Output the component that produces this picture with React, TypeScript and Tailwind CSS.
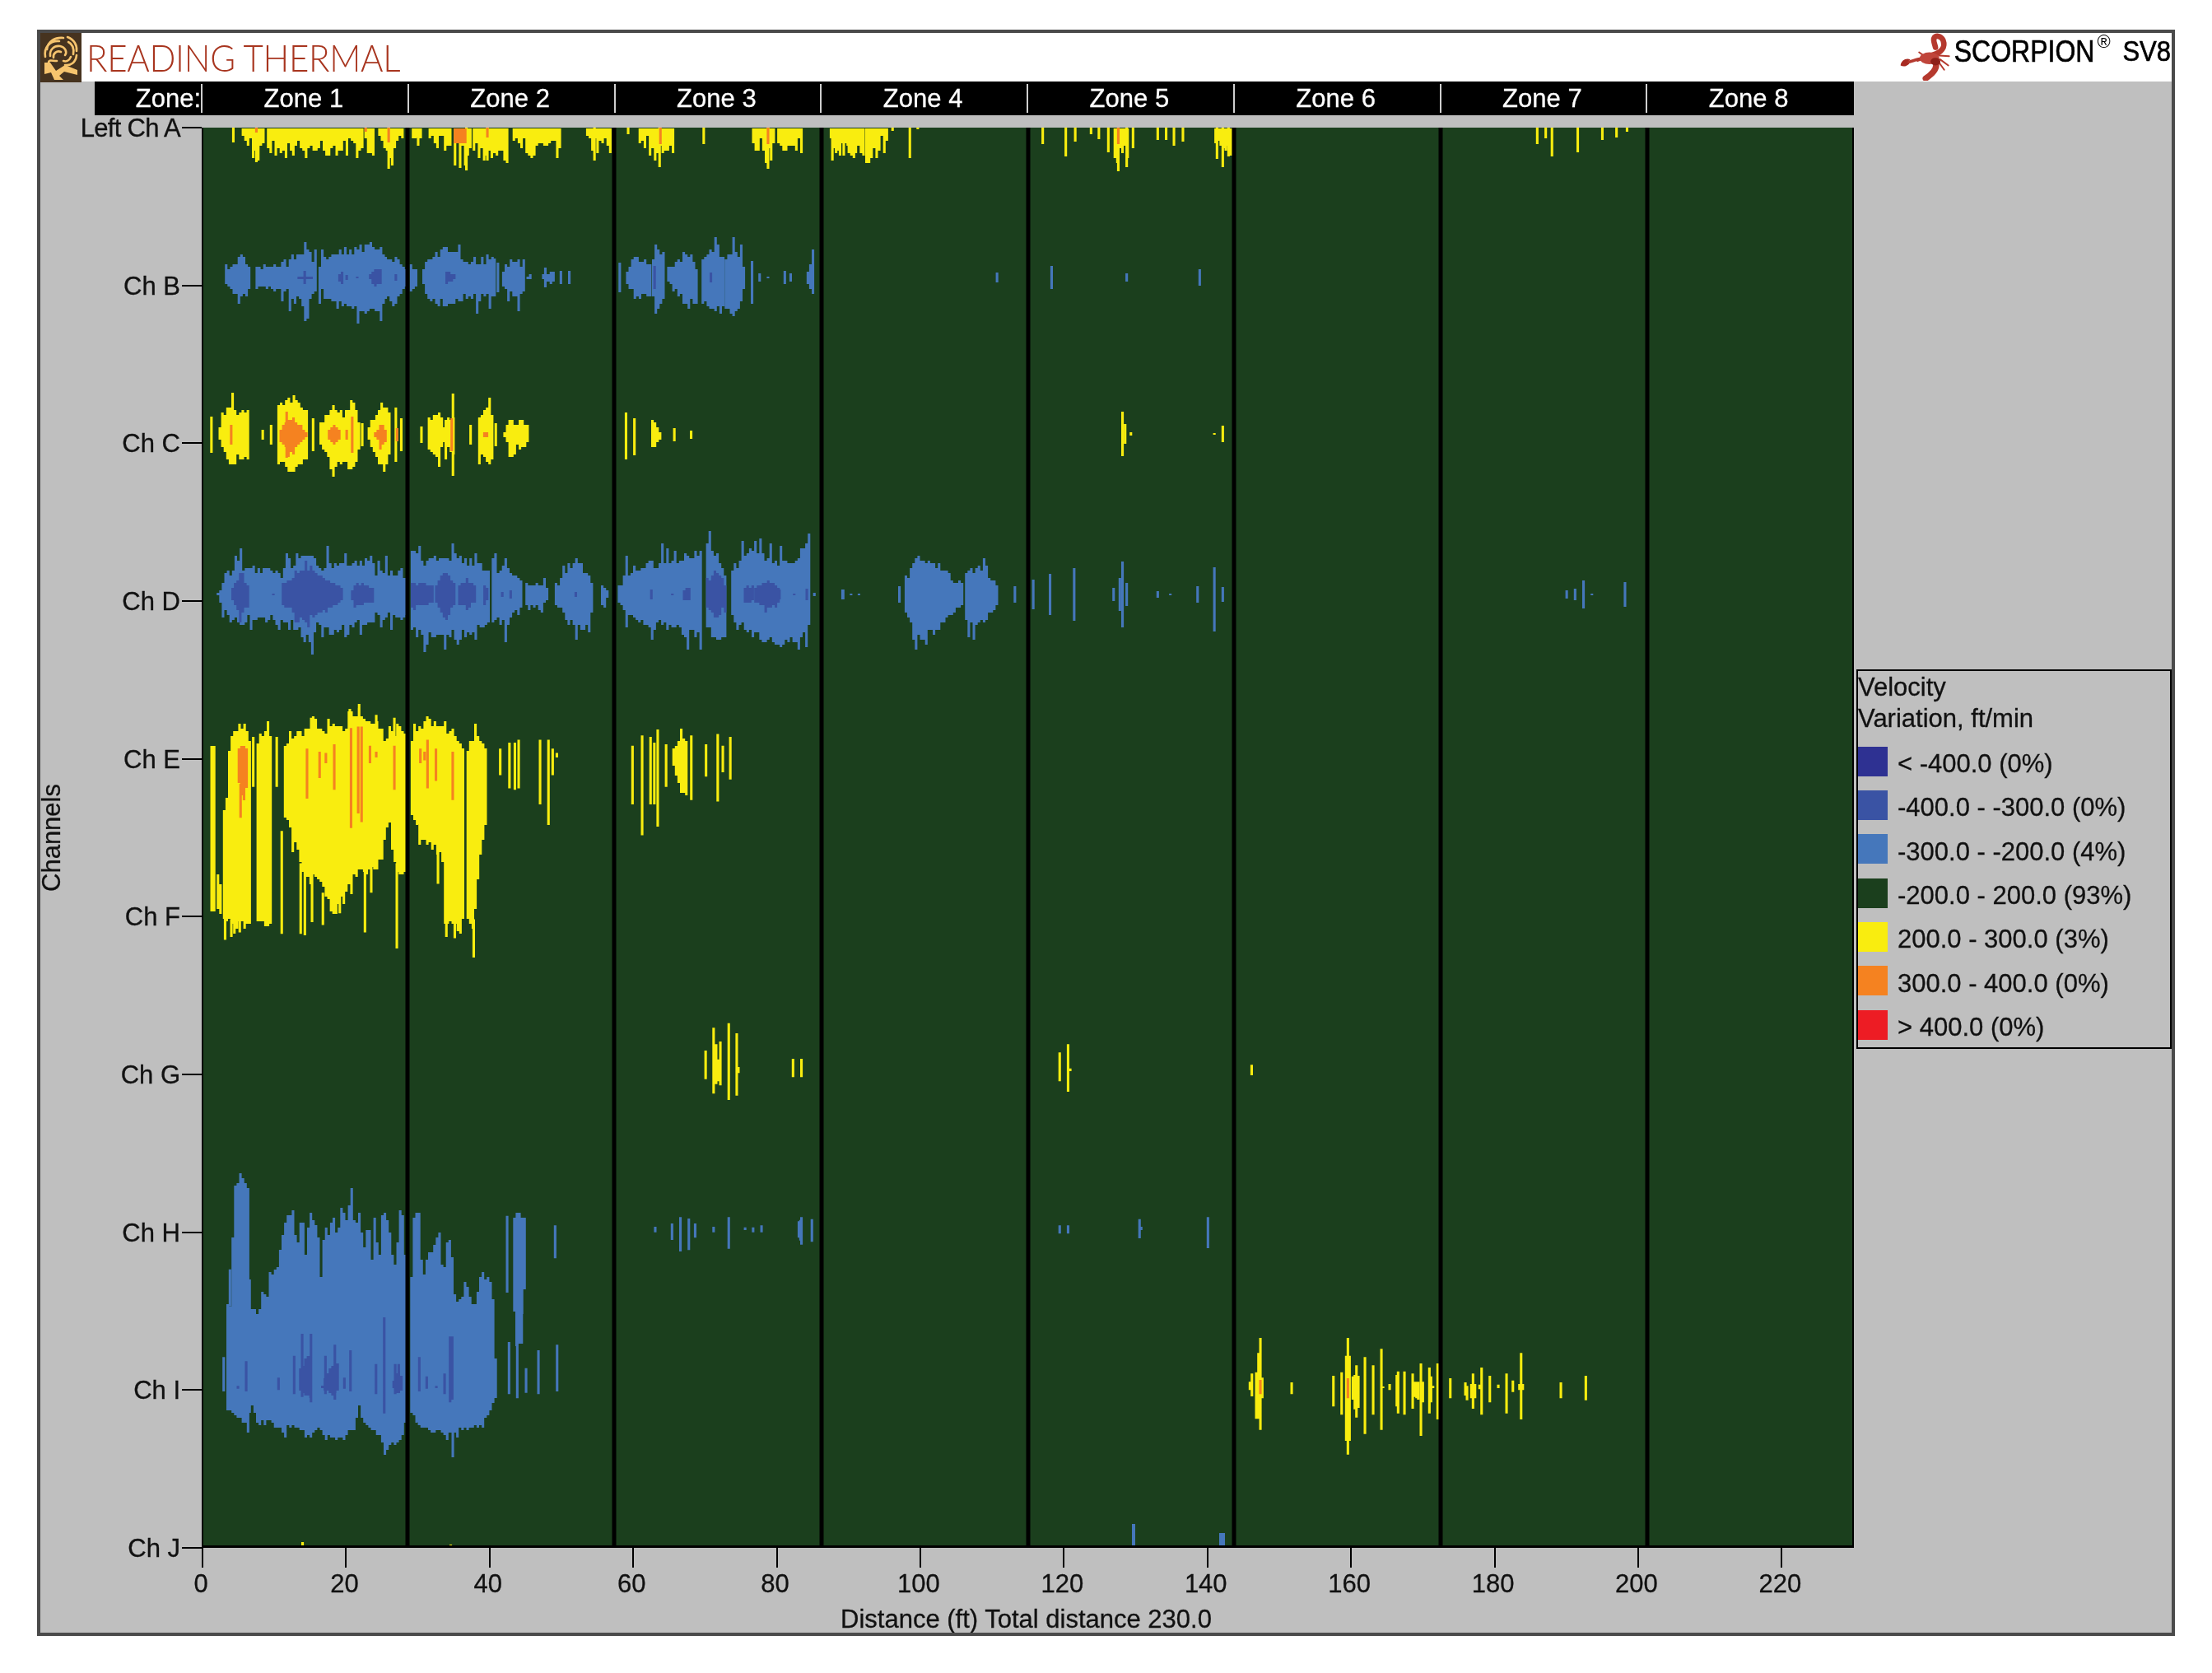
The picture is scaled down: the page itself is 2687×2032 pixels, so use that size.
import { type ReactNode } from "react"

// Velocity variation heat map (Reading Thermal Scorpion SV8).
// The heat map marks are built from column envelopes, in page pixels, and
// drawn as one svg path per colour band.

const ZONES = ["Zone 1", "Zone 2", "Zone 3", "Zone 4", "Zone 5", "Zone 6", "Zone 7", "Zone 8"]
const CHANNELS = ["Left Ch A", "Ch B", "Ch C", "Ch D", "Ch E", "Ch F", "Ch G", "Ch H", "Ch I", "Ch J"]
const TICKS = [0, 20, 40, 60, 80, 100, 120, 140, 160, 180, 200, 220]
const DIVIDERS = [495, 746, 998, 1249, 1499, 1750, 2001]

const LEGEND = [
  { color: "bg-[#2e3192]", label: "< -400.0 (0%)" },
  { color: "bg-[#3a53a4]", label: "-400.0 - -300.0 (0%)" },
  { color: "bg-[#4577bb]", label: "-300.0 - -200.0 (4%)" },
  { color: "bg-[#1b3f1d]", label: "-200.0 - 200.0 (93%)" },
  { color: "bg-[#f9ed0f]", label: "200.0 - 300.0 (3%)" },
  { color: "bg-[#f58220]", label: "300.0 - 400.0 (0%)" },
  { color: "bg-[#ed1c24]", label: "> 400.0 (0%)" },
]

type View = { x0: number; sx: number; y0: number; sy: number }
type Pt = [number, number, number]
type Lc = [number, number, number?]

const Z5: View = { x0: 230, sx: 1.96, y0: 620, sy: 2.8 }
const Z6: View = { x0: 230, sx: 3, y0: 1400, sy: 3 }
const Z7: View = { x0: 240, sx: 1.96, y0: 150, sy: 3 }
const Z8: View = { x0: 1000, sx: 1.568, y0: 150, sy: 2.41 }
const Z9: View = { x0: 1480, sx: 3, y0: 1600, sy: 3 }
const Z12: View = { x0: 750, sx: 1.96, y0: 1220, sy: 3 }

const GRAIN = 3.1

class Band {
  d = ""
  seed = 7
  rnd() {
    this.seed = (this.seed * 16807) % 2147483647
    return this.seed / 2147483647
  }
  rect(x: number, top: number, bot: number, w = GRAIN) {
    this.d += `M${x.toFixed(1)} ${top.toFixed(1)}h${w}V${bot.toFixed(1)}h-${w}Z`
  }
  fill(pts: Pt[], j: number, comb = false) {
    const x1 = pts[pts.length - 1][0]
    let i = 0
    for (let x = pts[0][0]; x <= x1; x += GRAIN) {
      while (i < pts.length - 2 && x > pts[i + 1][0]) i++
      const [xa, ta, ba] = pts[i]
      const [xb, tb, bb] = pts[i + 1]
      const f = xb === xa ? 0 : (x - xa) / (xb - xa)
      let top = ta + (tb - ta) * f
      let bot = ba + (bb - ba) * f
      const amp = j * Math.min(1, (bot - top) / 40)
      if (comb) {
        // teeth hanging from the top edge: most are short, a few reach the full length
        const r = this.rnd()
        bot -= (bot - top) * (r < 0.35 ? 0.45 + 0.25 * this.rnd() : r < 0.75 ? 0.2 + 0.25 * this.rnd() : 0.15 * this.rnd())
      } else {
        top -= this.rnd() < 0.18 ? amp * 2.2 * this.rnd() : amp * (this.rnd() - 0.55)
        bot += this.rnd() < 0.18 ? amp * 2.2 * this.rnd() : amp * (this.rnd() - 0.55)
      }
      this.rect(x, Math.round(top / 3) * 3, Math.round(bot / 3) * 3)
    }
  }
  // envelope given as up / down around a centre line
  blob(v: View, cy: number, pts: Pt[], j = 6, comb = false) {
    this.fill(pts.map(([d, u, b]) => [v.x0 + d / v.sx, cy - u, cy + b] as Pt), j, comb)
  }
  // envelope given as top / bottom in zoom coordinates
  area(v: View, pts: Pt[], j = 6) {
    this.fill(pts.map(([d, t, b]) => [v.x0 + d / v.sx, v.y0 + t / v.sy, v.y0 + b / v.sy] as Pt), j)
  }
  lines(v: View, rows: Pt[]) {
    for (const [d, t, b] of rows) this.rect(v.x0 + d / v.sx - 1.5, v.y0 + t / v.sy, v.y0 + b / v.sy)
  }
  ticks(v: View, cy: number, rows: Lc[]) {
    for (const [d, u, b] of rows) this.rect(v.x0 + d / v.sx - 1.5, cy - u, cy + (b ?? u))
  }
}

function buildBands() {
  const blue = new Band()
  const dark = new Band()
  const yellow = new Band()
  const orange = new Band()

  // Ch A hangs from the top edge
  const a = 155
  for (const p of [
    [[105, 0, 30], [140, 0, 44], [155, 0, 24]],
    [[165, 0, 36], [220, 0, 38]],
    [[225, 0, 36], [390, 0, 38]],
    [[397, 0, 38], [420, 0, 36]],
    [[430, 0, 20], [455, 0, 52], [490, 0, 20]],
    [[510, 0, 42], [530, 0, 28]],
    [[550, 0, 32], [600, 0, 26]],
    [[610, 0, 50], [640, 0, 52], [650, 0, 28]],
    [[655, 0, 42], [740, 0, 44]],
    [[750, 0, 36], [860, 0, 40]],
    [[925, 0, 16], [945, 0, 42], [985, 0, 28]],
    [[1050, 0, 28], [1100, 0, 50], [1130, 0, 36]],
    [[1320, 0, 28], [1345, 0, 46], [1360, 0, 50], [1370, 0, 18]],
    [[1380, 0, 30], [1435, 0, 32]],
    [[1505, 0, 42], [1568, 0, 36]],
  ] as Pt[][]) yellow.blob(Z7, a, p, 0, true)
  yellow.ticks(Z7, a, [[85, 0, 18], [1025, 0, 8], [1205, 0, 20], [945, 0, 40], [455, 0, 50], [640, 0, 52], [1358, 0, 50], [140, 0, 42], [690, 0, 40], [1100, 0, 48]])
  for (const p of [
    [[15, 0, 44], [45, 0, 42]],
    [[50, 0, 28], [75, 0, 36]],
    [[80, 0, 48], [120, 0, 30]],
    [[553, 0, 44], [580, 0, 52]],
    [[745, 0, 38], [775, 0, 38]],
  ] as Pt[][]) yellow.blob(Z8, a, p, 0, true)
  yellow.ticks(Z8, a, [
    [132, 0, 4], [165, 0, 37], [180, 0, 2], [418, 0, 20], [462, 0, 35], [480, 0, 17], [510, 0, 8], [525, 0, 14], [543, 0, 30],
    [562, 0, 53], [578, 0, 48], [590, 0, 25], [637, 0, 15], [653, 0, 15], [668, 0, 22], [685, 0, 17], [750, 0, 38], [761, 0, 48], [772, 0, 35],
    [1360, 0, 20], [1376, 0, 13], [1388, 0, 35], [1437, 0, 30], [1484, 0, 15], [1511, 0, 12], [1531, 0, 5],
  ])
  orange.ticks(Z7, a, [[140, 0, 6], [400, 0, 5], [455, 0, 18], [690, 0, 12], [1102, 0, 20], [1358, 0, 20]])
  orange.blob(Z7, a, [[610, 0, 19], [640, 0, 19]], 0)
  orange.ticks(Z8, a, [[562, 0, 20]])

  // Ch B
  const b = 337
  for (const p of [
    [[65, 8, 8], [80, 16, 16], [100, 26, 24], [125, 13, 13]],
    [[138, 11, 11], [160, 14, 14], [212, 16, 16], [218, 22, 22], [255, 34, 34], [282, 16, 13]],
    [[288, 16, 16], [320, 30, 30], [340, 32, 34], [410, 38, 42], [440, 32, 30]],
    [[445, 22, 25], [465, 25, 32], [495, 9, 9]],
    [[505, 15, 15], [523, 8, 8]],
    [[535, 11, 11], [550, 25, 30], [595, 36, 32], [640, 21, 25], [700, 21, 23]],
    [[725, 9, 9], [745, 23, 21], [775, 17, 23]],
    [[783, 2, 2], [795, 4, 4]],
    [[820, 3, 3], [850, 8, 8]],
    [[1020, 9, 9], [1040, 23, 23], [1075, 16, 23]],
    [[1082, 26, 26], [1090, 44, 48], [1110, 12, 22]],
    [[1118, 7, 7], [1165, 30, 36], [1188, 14, 25]],
    [[1200, 22, 34], [1230, 36, 39], [1250, 23, 34]],
    [[1255, 22, 34], [1280, 34, 44], [1300, 14, 16]],
    [[1450, 8, 8], [1465, 22, 30]],
  ] as Pt[][]) blue.blob(Z7, b, p, 10)
  blue.ticks(Z7, b, [[707, 23], [715, 18], [828, 12], [865, 8], [885, 8], [1005, 18], [1320, 20, 32], [1338, 5], [1358, 1], [1398, 8], [1412, 5]])
  dark.blob(Z7, b, [[238, 2, 2], [272, 2, 2]], 0)
  dark.ticks(Z7, b, [[255, 8], [355, 3], [380, 1], [472, 4], [1088, 14], [1222, 6]])
  dark.blob(Z7, b, [[335, 5, 5], [345, 8, 8]], 0)
  dark.blob(Z7, b, [[408, 3, 3], [420, 10, 10], [435, 9, 9]], 2)
  dark.blob(Z7, b, [[590, 8, 8], [612, 2, 2]], 0)
  blue.ticks(Z8, b, [[331, 6], [435, 14], [578, 5], [717, 10]])

  // Ch C
  const c = 528
  for (const p of [
    [[50, 8, 8], [65, 30, 28], [80, 36, 40], [90, 28, 28], [120, 28, 28]],
    [[190, 33, 33], [225, 46, 44], [262, 26, 26]],
    [[290, 14, 14], [320, 36, 36], [345, 25, 31], [368, 42, 44], [382, 16, 16]],
    [[405, 8, 8], [435, 39, 39], [458, 24, 24]],
    [[548, 16, 16], [570, 25, 27], [585, 11, 11]],
    [[588, 18, 18], [612, 24, 24]],
    [[668, 24, 24], [690, 32, 33], [700, 25, 24]],
    [[728, 3, 3], [745, 24, 26], [755, 12, 12], [765, 16, 16], [778, 14, 14], [788, 2, 2]],
    [[1080, 18, 16], [1100, 3, 3]],
  ] as Pt[][]) yellow.blob(Z7, c, p, 8)
  yellow.ticks(Z7, c, [[33, 22], [155, 6], [175, 12], [275, 20], [392, 14], [472, 33], [485, 20], [533, 10], [608, 50], [650, 12], [710, 14], [1020, 27, 30], [1040, 20, 25], [1135, 8], [1175, 5]])
  orange.blob(Z7, c, [[195, 6, 6], [212, 18, 22], [225, 20, 20], [258, 3, 3]], 6)
  orange.blob(Z7, c, [[310, 5, 5], [322, 13, 13], [337, 3, 3]], 5)
  orange.blob(Z7, c, [[420, 2, 2], [435, 14, 14], [450, 3, 3]], 5)
  orange.blob(Z7, c, [[65, 1, 1], [118, 1, 1]], 0)
  orange.blob(Z7, c, [[680, 3, 3], [695, 1, 1]], 0)
  orange.ticks(Z7, c, [[80, 12], [212, 28], [355, 6], [368, 22], [475, 8], [605, 20]])
  yellow.ticks(Z8, 527, [[570, 27], [575, 12], [586, 2], [745, 1], [761, 10]])

  // Ch D
  const d = 722
  for (const p of [
    [[65, 2, 2], [92, 27, 27], [120, 42, 42], [130, 30, 30], [220, 27, 29], [285, 52, 54], [300, 36, 40], [380, 36, 38], [385, 38, 36], [435, 38, 34], [440, 24, 29], [490, 28, 28], [515, 24, 27]],
    [[527, 52, 46], [560, 40, 50], [600, 47, 46], [640, 42, 50], [680, 38, 44], [710, 25, 31]],
    [[720, 30, 30], [750, 35, 35], [790, 16, 16]],
    [[800, 12, 12], [820, 14, 14], [850, 8, 8]],
    [[870, 12, 12], [900, 33, 32], [920, 39, 36], [940, 27, 46], [960, 9, 9]],
    [[980, 11, 11], [995, 5, 5]],
    [[1020, 11, 11], [1050, 31, 27], [1080, 35, 32], [1130, 39, 36], [1170, 39, 46], [1220, 55, 46]],
    [[1230, 66, 36], [1250, 41, 56], [1275, 27, 46]],
    [[1290, 32, 27], [1330, 55, 46], [1400, 38, 60], [1450, 46, 54], [1465, 64, 44], [1478, 56, 44]],
  ] as Pt[][]) blue.blob(Z5, d, p, 11)
  blue.ticks(Z5, d, [[1488, 2], [1555, 6]])
  for (const p of [
    [[100, 8, 8], [120, 25, 25], [140, 8, 8]],
    [[220, 12, 12], [275, 32, 32], [340, 14, 14], [360, 8, 8]],
    [[385, 6, 6], [395, 14, 14], [435, 8, 8]],
    [[527, 13, 13], [555, 14, 14], [580, 8, 8]],
    [[585, 10, 10], [607, 30, 30], [630, 12, 12]],
    [[640, 12, 12], [660, 18, 18], [680, 8, 8]],
    [[700, 12, 12], [710, 6, 6]],
    [[1175, 7, 7], [1190, 7, 7]],
    [[1230, 15, 15], [1250, 30, 30], [1275, 12, 12]],
    [[1320, 10, 10], [1340, 8, 8]],
    [[1345, 8, 8], [1375, 17, 17], [1400, 10, 10]],
  ] as Pt[][]) dark.blob(Z5, d, p, 5)
  dark.ticks(Z5, d, [[200, 1], [745, 3], [765, 5], [920, 3], [1100, 6], [1150, 1], [1405, 6], [1440, 1], [1470, 7]])
  blue.blob(Z8, d, [[155, 20, 20], [178, 44, 52], [215, 34, 46], [250, 16, 16], [265, 11, 11]], 10)
  blue.blob(Z8, d, [[270, 27, 36], [295, 30, 38], [330, 10, 10]], 10)
  blue.ticks(Z8, d, [
    [38, 6], [53, 1], [68, 1], [145, 10], [365, 10], [400, 18], [432, 25], [478, 32], [553, 8], [565, 20], [570, 40], [578, 14],
    [637, 4], [661, 1], [713, 10], [745, 33, 45], [761, 9], [1416, 5], [1432, 7], [1448, 17], [1464, 1], [1527, 15],
  ])

  // Ch E / F
  for (const p of [
    [[50, 800, 1350], [62, 815, 1350]],
    [[65, 1240, 1350], [75, 1280, 1390]],
    [[80, 1020, 1390], [85, 1020, 1400], [95, 780, 1400], [125, 725, 1400], [145, 780, 1400]],
    [[160, 800, 1400], [175, 755, 1410], [195, 780, 1400]],
    [[225, 790, 1050], [250, 775, 1130], [270, 770, 1240], [290, 730, 1240], [310, 750, 1260], [340, 730, 1370], [370, 740, 1290], [380, 695, 1260], [405, 690, 1230], [425, 730, 1230], [445, 715, 1210], [465, 780, 1110], [475, 780, 1050], [480, 780, 1150], [495, 730, 1240], [512, 770, 1240]],
    [[527, 790, 1040], [545, 740, 1100], [570, 720, 1140], [600, 740, 1170]],
    [[606, 740, 1400], [625, 750, 1400], [640, 805, 1400], [650, 805, 1400]],
    [[660, 805, 1400], [675, 770, 1400], [690, 780, 1180], [705, 795, 1050]],
    [[1150, 810, 870], [1170, 770, 975], [1185, 800, 970]],
  ] as Pt[][]) yellow.area(Z5, p, 9)
  yellow.lines(Z5, [
    [85, 1300, 1460], [100, 1390, 1450], [120, 1390, 1435], [152, 770, 940], [208, 770, 940], [220, 1090, 1440],
    [265, 1200, 1440], [275, 1200, 1445], [292, 1200, 1400], [318, 1300, 1410], [358, 1300, 1370], [418, 1200, 1435], [433, 1200, 1300], [494, 1200, 1490],
    [382, 675, 760], [404, 672, 760], [445, 695, 760], [290, 705, 760], [488, 705, 780],
    [592, 1150, 1270], [612, 1390, 1450], [632, 1390, 1455], [677, 1390, 1520],
    [740, 810, 900], [762, 790, 945], [775, 790, 950], [784, 780, 945], [835, 780, 1000], [855, 780, 1070], [865, 810, 900], [875, 825, 840],
    [1055, 800, 1000], [1078, 765, 1105], [1098, 770, 1000], [1107, 790, 1000], [1115, 745, 1075], [1135, 795, 940], [1195, 765, 985], [1230, 795, 905], [1258, 760, 990], [1270, 800, 890], [1288, 770, 915],
  ])
  orange.area(Z5, [[115, 810, 930], [125, 795, 1000], [135, 810, 930]], 2)
  orange.lines(Z5, [
    [122, 930, 1045], [280, 810, 980], [310, 820, 910], [325, 825, 860], [345, 795, 950], [385, 740, 1080], [402, 735, 1030], [410, 735, 1060], [430, 800, 860], [445, 820, 840], [488, 800, 950],
    [550, 810, 860], [560, 820, 850], [567, 780, 945], [587, 810, 920], [627, 820, 985],
  ])

  // Ch G
  yellow.lines(Z12, [
    [210, 168, 272], [229, 85, 325], [235, 145, 290], [240, 200, 280], [245, 135, 295], [265, 68, 348], [284, 105, 332], [288, 228, 250],
    [418, 198, 265], [438, 198, 265], [1053, 175, 280], [1073, 145, 318], [1078, 233, 243], [1510, 220, 258],
  ])

  // Ch H / I
  for (const p of [
    [[135, 555, 930], [145, 555, 940], [160, 120, 950], [190, 85, 980], [210, 130, 1000]],
    [[215, 455, 950], [225, 570, 915], [240, 570, 960], [245, 610, 960], [260, 520, 965], [280, 520, 970], [290, 460, 975], [320, 410, 1000], [340, 270, 1030], [350, 235, 1000], [375, 215, 990], [390, 380, 1000], [405, 215, 1020], [420, 370, 1020], [435, 215, 1030], [450, 240, 1020], [465, 300, 985], [475, 460, 1010], [490, 240, 1045], [500, 320, 1040], [520, 225, 1040], [535, 310, 1045], [550, 195, 1030], [570, 250, 1020], [587, 130, 1020], [600, 290, 1000], [615, 215, 920], [630, 350, 980], [650, 260, 990], [665, 430, 1010], [670, 260, 1020], [690, 390, 1040], [700, 205, 1050], [715, 230, 1085], [730, 320, 1060], [745, 440, 1060], [765, 190, 1040], [780, 260, 1020], [790, 730, 880]],
    [[805, 460, 940], [815, 230, 970], [835, 205, 990], [845, 465, 1005], [860, 390, 1005], [890, 335, 1015], [907, 275, 1020], [920, 480, 1025], [935, 320, 1040], [950, 330, 1020], [965, 540, 1015], [985, 535, 1010], [1005, 470, 1010], [1025, 560, 1010], [1040, 540, 1000], [1065, 425, 985], [1080, 480, 960], [1100, 480, 930], [1105, 585, 900], [1114, 810, 880]],
    [[1180, 230, 570], [1200, 215, 690], [1220, 260, 440]],
    [[1188, 570, 700], [1212, 570, 690]],
  ] as Pt[][]) blue.area(Z6, p, 5)
  blue.lines(Z6, [
    [125, 745, 870], [148, 425, 560], [960, 1000, 1110], [1158, 230, 510], [1165, 690, 880], [1195, 695, 895], [1227, 785, 875], [1272, 720, 880], [1333, 265, 385], [1340, 700, 870],
  ])
  for (const p of [
    [[400, 790, 870], [425, 740, 890], [440, 740, 890]],
    [[480, 845, 855], [510, 780, 880], [530, 770, 880], [545, 770, 850]],
    [[740, 830, 860], [755, 790, 885], [775, 830, 860]],
  ] as Pt[][]) dark.area(Z6, p, 2)
  dark.lines(Z6, [
    [177, 850, 860], [207, 760, 870], [325, 820, 865], [382, 740, 880], [411, 660, 890], [443, 660, 910], [496, 740, 880], [530, 700, 900], [565, 820, 860], [587, 720, 870],
    [680, 770, 880], [710, 600, 950], [750, 770, 880], [763, 770, 870], [838, 745, 870], [865, 815, 860], [900, 850, 858], [930, 805, 880], [950, 670, 910], [958, 670, 900],
  ])
  blue.lines(Z12, [
    [90, 810, 830], [130, 798, 858], [150, 775, 900], [170, 780, 895], [185, 798, 850], [229, 810, 830], [265, 775, 890], [304, 812, 822], [323, 812, 830], [343, 805, 830],
    [432, 790, 850], [436, 785, 860], [438, 775, 875], [463, 782, 865], [1053, 805, 835], [1073, 805, 835], [1243, 782, 852], [1247, 810, 822], [1406, 775, 888],
  ])

  // Ch I, right hand yellow run
  yellow.lines(Z9, [
    [115, 235, 265], [122, 205, 288], [138, 200, 370], [146, 130, 370], [153, 75, 410], [160, 220, 295], [267, 237, 280], [419, 213, 325], [449, 200, 355],
    [466, 140, 450], [472, 75, 500], [478, 140, 450], [490, 215, 300], [497, 210, 335], [503, 175, 365], [510, 213, 330], [534, 145, 425], [564, 175, 355], [594, 115, 410], [600, 252, 258], [624, 243, 265],
    [650, 210, 325], [655, 197, 350], [678, 197, 355], [708, 205, 333], [716, 235, 290], [722, 235, 295], [728, 235, 300], [738, 168, 432], [745, 235, 310], [769, 183, 350], [775, 215, 310], [782, 250, 258], [799, 168, 372],
    [845, 222, 295], [900, 237, 285], [906, 250, 302], [922, 243, 295], [928, 205, 333], [935, 243, 295], [952, 245, 262], [959, 183, 355], [989, 213, 310], [1020, 245, 258], [1050, 205, 350], [1073, 230, 272],
    [1097, 243, 265], [1103, 130, 372], [1109, 243, 265], [1248, 237, 295], [1339, 213, 302],
  ])
  orange.lines(Z9, [[153, 228, 280], [472, 222, 295]])

  // Ch J, barely there
  yellow.rect(366, 1873, 1879)
  yellow.rect(546, 1876, 1879)
  blue.rect(1375, 1851, 1880, 4)
  blue.rect(1481, 1862, 1880, 7)

  return { blue: blue.d, dark: dark.d, yellow: yellow.d, orange: orange.d }
}

const BANDS = buildBands()

function HeatMap() {
  return (
    <svg viewBox="245 155 2007 1725" className="block h-[1725px] w-[2007px]">
      <rect x="245" y="155" width="2007" height="1725" fill="#1b3f1d" />
      <path d={BANDS.blue} fill="#4577bb" />
      <path d={BANDS.dark} fill="#3a53a4" />
      <path d={BANDS.yellow} fill="#f9ed0f" />
      <path d={BANDS.orange} fill="#f58220" />
      {DIVIDERS.map((x) => (
        <rect key={x} x={x - 2.5} y="155" width="5" height="1725" fill="#000" />
      ))}
      <rect x="245" y="155" width="2" height="1725" fill="#000" />
      <rect x="2250" y="155" width="2" height="1725" fill="#000" />
      <rect x="245" y="1877" width="2007" height="3" fill="#000" />
    </svg>
  )
}

function SpiralLogo() {
  return (
    <svg viewBox="0 0 50 60" className="h-[60px] w-[50px] shrink-0">
      <rect width="50" height="60" fill="#46331f" />
      <g fill="none" stroke="#f6c46e" strokeWidth="2.6" strokeLinecap="round">
        <path d="M8 20 C9 10 18 5 28 6" />
        <path d="M6 29 C4 17 12 9 23 10" />
        <path d="M33 5 C41 8 45 15 44 22" />
        <path d="M34 11 C40 14 41 20 40 26" />
        <path d="M44 27 C43 36 37 40 30 39" />
        <path d="M37 29 C35 34 31 35 28 34" />
        <path d="M12 28 C11 20 17 15 24 16 C30 17 33 23 30 27" />
        <path d="M16 30 C15 25 20 21 25 23" />
        <path d="M20 34 C14 34 10 32 10 36" />
      </g>
      <path d="M5 36 L12 36 L19 46 L30 39 L45 45 L45 51 L29 47 L23 52 L28 57 L17 57 L13 48 L5 50 Z" fill="#f6c46e" />
    </svg>
  )
}

function ScorpionMark() {
  return (
    <svg viewBox="25 15 190 175" className="h-[58px] w-[63px] shrink-0">
      <g fill="none" stroke="#b5392e" strokeLinecap="round">
        <path d="M150 95 C178 88 196 68 186 42 C178 24 156 22 152 36 C150 46 156 58 158 68" strokeWidth="20" />
        <path d="M120 108 C95 106 75 120 48 124" strokeWidth="11" />
        <path d="M160 125 C165 150 142 168 122 182" strokeWidth="22" />
        <path d="M172 98 L208 100 M175 112 L205 134 M170 122 L190 150" strokeWidth="6" />
        <path d="M112 96 L98 86 M108 112 L92 118" strokeWidth="6" />
      </g>
      <path d="M30 134 C33 114 50 106 66 112 L54 122 L62 128 C52 138 40 140 30 134 Z" fill="#a82a22" />
      <ellipse cx="136" cy="108" rx="36" ry="22" fill="#c0453b" />
      <ellipse cx="158" cy="120" rx="18" ry="14" fill="#8d2019" />
    </svg>
  )
}

function Cell({ children }: { children: ReactNode }) {
  return <span className="text-[31px] leading-[34px] whitespace-nowrap text-[#111]">{children}</span>
}

export default function App() {
  return (
    <div className="h-[2032px] w-[2687px] overflow-hidden bg-white pt-9 pl-[45px] font-['Liberation_Sans',Arial,sans-serif] blur-[0.6px] [-webkit-text-stroke:0.3px_currentColor]">
      <div className="flex h-[1951px] w-[2597px] flex-col overflow-hidden border-4 border-[#4a4a4a] bg-[#bfbfbf]">
        {/* title strip */}
        <header className="flex h-[59px] shrink-0 items-start justify-between bg-white">
          <div className="flex items-center">
            <SpiralLogo />
            <span className="ml-[6px] inline-block scale-y-107 font-['Lato',sans-serif] text-[42px] leading-[60px] font-light tracking-[-0.3px] text-[#a8351f] [-webkit-text-stroke:0]">
              READING THERMAL
            </span>
          </div>
          <div className="flex items-start">
            <ScorpionMark />
            <div className="mt-[2px] ml-[4px] flex items-start text-[32px] leading-[36px] text-black [-webkit-text-stroke:0.6px_#000]">
              <span className="inline-block origin-top scale-y-115">SCORPION</span>
              <span className="mt-[-3px] ml-[3px] w-[31px] text-[22px] leading-[24px] [-webkit-text-stroke:0]">®</span>
              <span className="mr-[1px] inline-block origin-top scale-y-115 text-[31px]">SV8</span>
            </div>
          </div>
        </header>

        <div className="flex min-h-0 flex-1">
          <main className="w-[2206px] shrink-0">
            {/* zone strip */}
            <div className="ml-[66px] flex h-[41px] w-[2137px] items-center bg-black text-[31px] text-white">
              <span className="w-[129px] translate-y-[1px] text-right">Zone:</span>
              {ZONES.map((z) => (
                <div key={z} className="flex w-[250.75px] items-center">
                  <span className="h-[35px] w-[2px] bg-[#cfcfcf]" />
                  <span className="flex-1 translate-y-[1px] pr-[3px] text-center">{z}</span>
                </div>
              ))}
            </div>

            {/* plot with channel axis */}
            <div className="mt-[15px] flex">
              <div className="flex w-[28px] items-center justify-center">
                <span className="rotate-180 [writing-mode:vertical-rl]">
                  <Cell>Channels</Cell>
                </span>
              </div>
              <div className="flex h-[1725px] w-[168px] flex-col justify-between">
                {CHANNELS.map((ch) => (
                  <div key={ch} className="flex h-0 items-center justify-end gap-[2px]">
                    <span className={ch === "Left Ch A" ? "translate-y-[1px] tracking-[-0.7px]" : "translate-y-[1px]"}>
                      <Cell>{ch}</Cell>
                    </span>
                    <span className="h-[2px] w-[24px] bg-black" />
                  </div>
                ))}
              </div>
              <HeatMap />
            </div>

            {/* distance axis */}
            <div className="ml-[196px] flex">
              {TICKS.map((t) => (
                <div key={t} className="w-[174.4px] last:w-0">
                  <div className="flex w-[2px] flex-col items-center">
                    <span className="h-[24px] w-[2px] bg-black" />
                    <span className="mt-[3px] -translate-x-[2px]">
                      <Cell>{t}</Cell>
                    </span>
                  </div>
                </div>
              ))}
            </div>
            <div className="mt-[9px] ml-[196px] w-[2003px] text-center">
              <Cell>Distance (ft) Total distance 230.0</Cell>
            </div>
          </main>

          {/* legend */}
          <aside className="mt-[714px] h-[461px] w-[383px] shrink-0 border-2 border-black text-[31px] leading-[39px] text-[#111]">
            <div>Velocity</div>
            <div className="-mt-[1px]">Variation, ft/min</div>
            <div className="mt-[6px]">
              {LEGEND.map((row) => (
                <div key={row.label} className="flex h-[53.33px] items-center gap-[12px]">
                  <span className={`h-[36px] w-[36px] shrink-0 ${row.color}`} />
                  <span className="translate-y-[3px] whitespace-nowrap">{row.label}</span>
                </div>
              ))}
            </div>
          </aside>
        </div>
      </div>
    </div>
  )
}
